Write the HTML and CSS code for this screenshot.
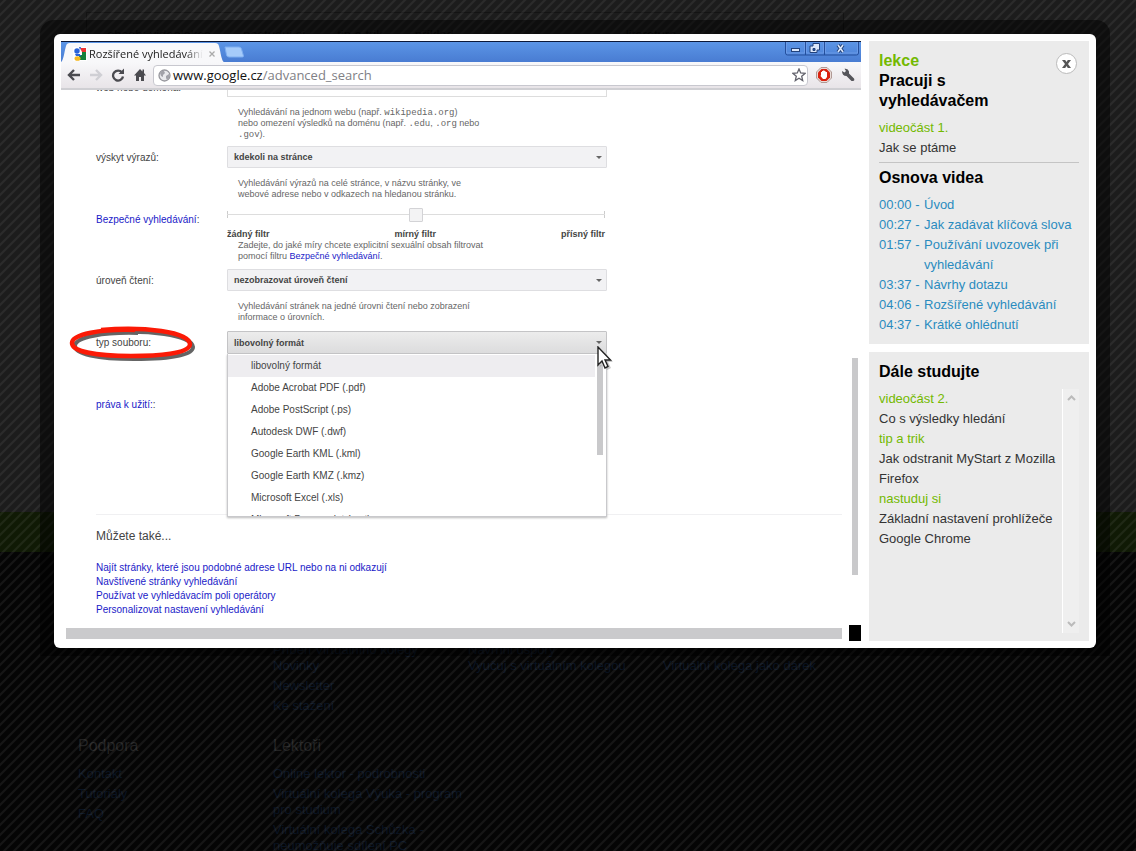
FILE: index.html
```html
<!DOCTYPE html>
<html lang="cs">
<head>
<meta charset="utf-8">
<title>Pracuji s vyhledávačem</title>
<link rel="stylesheet" href="styles.css">
</head>
<body>
<div class="page">
  <header class="page-head">
    <nav class="page-nav"><span>obsah: videolekce</span><span>nastuduj si</span><span>tip a trik</span><span>příklad</span><span class="far">literatura</span></nav>
  </header>
  <div class="strip"></div>
  <footer class="footer">
    <div class="cols">
      <ul></ul>
      <ul><li>Příběh Virtuálního kolegy</li><li>Novinky</li><li>Newsletter</li><li>Ke stažení</li></ul>
      <ul><li>Navrhni úspory</li><li>Vyučuj s virtuálním kolegou</li></ul>
      <ul><li>&nbsp;</li><li>Virtuální kolega jako dárek</li></ul>
    </div>
    <div class="cols">
      <section><h2>Podpora</h2><ul><li>Kontakt</li><li>Tutoriály</li><li>FAQ</li></ul></section>
      <section><h2>Lektoři</h2><ul><li>Online lektor - podrobnosti</li><li>Virtuální kolega Výuka - program pro studium</li><li>Virtuální kolega Schůzka - neumožňuje sdílení PC</li></ul></section>
    </div>
  </footer>
</div>
<svg class="stripes" width="100%" height="100%">
  <defs><pattern id="diag" width="10" height="10" patternUnits="userSpaceOnUse"><path d="M-3 8L8-3M-3 18L18-3M2 13L13 2" fill="none"/><path d="M-2 7L7-2M-2 17L17-2" stroke="#fff" stroke-opacity=".065" stroke-width="2"/></pattern></defs>
  <rect width="100%" height="100%" fill="url(#diag)"/>
</svg>

<div class="frame" role="dialog" aria-label="Pracuji s vyhledávačem">
 <div class="dialog">
  <main class="browser">
    <div class="tabstrip">
      <svg class="edge" width="9" height="19" viewBox="0 0 9 19"><path d="M0 19C3 18 4 3 6 1Q7 0 9 0V19Z" fill="#f8f8fa"/></svg>
      <div class="tab">
        <svg width="14" height="14" viewBox="0 0 14 14"><path fill="#fff" d="M0 0H14V14H0z"/><path fill="#e33" d="M7 1h6v4H9z"/><path fill="#16803a" d="M8 5h5v8H6V9h2z"/><circle cx="4" cy="4" r="2.700" fill="#2a62d8"/><path fill="#2a62d8" d="M6 0l2 0-1 3zM2 7h6v2H3z"/><ellipse cx="4.500" cy="11.500" rx="3" ry="2.300" fill="#f5b820"/><path fill="#fff" d="M7 5h2v3H7z"/></svg>
        <span class="tab-title">Rozšířené vyhledávání</span>
        <svg width="6" height="6" viewBox="0 0 6 6"><path d="M.5.500l5 5m0-5l-5 5" stroke="#aaa" stroke-width="1.300"/></svg>
      </div>
      <svg class="edge" width="9" height="19" viewBox="0 0 9 19"><path d="M9 19C6 18 5 3 3 1Q2 0 0 0V19Z" fill="#f8f8fa"/></svg>
      <svg class="newtab" width="20" height="12" viewBox="0 0 20 12"><path d="M1 1h14q2 0 2.500 2l2 7q0 1-1 1H5q-2 0-2.500-2z" fill="#a5cbfa" stroke="#7eaef0"/></svg>
      <svg class="wins" width="74" height="14" viewBox="0 0 74 14"><path d="M.5 0v11q0 2 2 2h69q2 0 2-2V0M20.500 0v13M39.500 0v13" fill="none" stroke="#244f9c"/><path d="M1.500 0v11h18V0m2 0v11h17V0m2 0v11h32V0" fill="none" stroke="#6b9ae6"/><rect x="6.500" y="6.500" width="8" height="3" fill="#dbe7fa" stroke="#23437c"/><path d="M28 1.500h6.500V8H32v2.500h-7V4h3z" fill="#dbe7fa" stroke="#23437c"/><path d="M28 6.500h2v2h-2z" fill="#2d5aa6" stroke="#23437c"/><path d="M53 3l5 7m0-7l-5 7" stroke="#23437c" stroke-width="3.600"/><path d="M53 3l5 7m0-7l-5 7" stroke="#dbe7fa" stroke-width="1.600"/></svg>
    </div>
    <div class="toolbar">
      <svg width="14" height="14" viewBox="0 0 14 14"><path d="M13 7H3M7 2L2 7l5 5" fill="none" stroke="#4b4b50" stroke-width="2.400"/></svg>
      <svg width="14" height="14" viewBox="0 0 14 14"><path d="M1 7h10M7 2l5 5-5 5" fill="none" stroke="#cfcfd4" stroke-width="2.400"/></svg>
      <svg width="14" height="14" viewBox="0 0 14 14"><path d="M11 4.500A5 5 0 1 0 12 8.500" fill="none" stroke="#4b4b50" stroke-width="2.300"/><path d="M13 .5V6H7.500z" fill="#4b4b50"/></svg>
      <svg width="14" height="14" viewBox="0 0 14 14"><path d="M7 1L1 7.500h2V13h3V9h2v4h3V7.500h2L11 5V1.500H9.500v2z" fill="#4b4b50"/></svg>
      <div class="address">
        <svg width="13" height="13" viewBox="0 0 13 13"><circle cx="6.500" cy="6.500" r="5.500" fill="#e9e9ec" stroke="#96969c" stroke-width="1.300"/><path d="M2 4q2-3 4-2l1 2-2 2v2L3 7zM8 7l3-2 .5 3-2.500 3-1-2z" fill="#a2a2a9"/></svg>
        <span class="url"><b>www.google.cz</b>/advanced_search</span>
        <svg width="14" height="14" viewBox="0 0 14 14"><path d="M7 1l1.700 4 4.300.4-3.300 2.800 1 4.300L7 10.200l-3.700 2.300 1-4.300L1 5.400 5.300 5z" fill="#fff" stroke="#62626c" stroke-width="1.300"/></svg>
      </div>
      <svg width="16" height="16" viewBox="0 0 16 16"><path d="M5 .5h6L15.500 5v6L11 15.500H5L.5 11V5z" fill="#e9dcd8" stroke="#b09a96"/><path d="M5.500 2h5L14 5.500v5L10.500 14h-5L2 10.500v-5z" fill="#d9220f"/><path d="M5 7V5h1V4h1V3.500h1.500V4h1v1H11v5l-1.500 2H7L4.500 9 5 8z" fill="#fff"/></svg>
      <svg class="wrench" width="14" height="14" viewBox="0 0 14 14"><path d="M1 3l2.500 1.500L5 3 3.500.8Q7 0 8 3.500L8 5.500l5 5q1 2-1 2.500h-1.500L5.500 8Q1 8 1 3z" fill="#55555a"/></svg>
    </div>

    <div class="viewport">
      <div class="row row-web">
        <label for="web">web nebo doména:</label>
        <div class="control">
          <input class="webfield" id="web" type="text">
          <p class="help">Vyhledávání na jednom webu (např. <code>wikipedia.org</code>)<br>nebo omezení výsledků na doménu (např. <code>.edu</code>, <code>.org</code> nebo<br><code>.gov</code>).</p>
        </div>
      </div>
      <div class="row">
        <label for="where">výskyt výrazů:</label>
        <div class="control">
          <select id="where"><option>kdekoli na stránce</option></select>
          <p class="help">Vyhledávání výrazů na celé stránce, v názvu stránky, ve<br>webové adrese nebo v odkazech na hledanou stránku.</p>
        </div>
      </div>
      <div class="row row-safe">
        <label for="safe"><a href="#">Bezpečné vyhledávání</a>:</label>
        <div class="control">
          <input type="range" id="safe" min="0" max="2" value="1">
          <div class="scale"><span>žádný filtr</span><span>mírný filtr</span><span>přísný filtr</span></div>
          <p class="help">Zadejte, do jaké míry chcete explicitní sexuální obsah filtrovat<br>pomocí filtru <a href="#">Bezpečné vyhledávání</a>.</p>
        </div>
      </div>
      <div class="row">
        <label for="level">úroveň čtení:</label>
        <div class="control">
          <select id="level"><option>nezobrazovat úroveň čtení</option></select>
          <p class="help">Vyhledávání stránek na jedné úrovni čtení nebo zobrazení<br>informace o úrovních.</p>
        </div>
      </div>
      <div class="row">
        <label for="type">typ souboru:</label>
        <svg class="ring" width="128" height="38" viewBox="0 0 128 38"><path d="M32 4C75 0 120 6 121 18 121 28 88 30 62 30 25 30 3 25 3 17 3 8 32 3 66 4" fill="none" stroke="#222" stroke-opacity=".7" stroke-width="4" transform="translate(3 3)"/><path d="M32 4C75 0 120 6 121 18 121 28 88 30 62 30 25 30 3 25 3 17 3 8 32 3 66 4" fill="none" stroke="#fb1a06" stroke-width="4.500"/></svg>
        <div class="control">
          <button class="open" id="type" type="button">libovolný formát</button>
          <ul class="menu">
            <li class="on">libovolný formát</li><li>Adobe Acrobat PDF (.pdf)</li><li>Adobe PostScript (.ps)</li><li>Autodesk DWF (.dwf)</li><li>Google Earth KML (.kml)</li><li>Google Earth KMZ (.kmz)</li><li>Microsoft Excel (.xls)</li><li>Microsoft Powerpoint (.ppt)</li>
          </ul>
          <svg class="cursor" width="16" height="26" viewBox="0 0 16 26"><path d="M3 3v18l4-4 3 7 4-2-3-6h5z" fill="#999" opacity=".5"/><path d="M1 1v18l4-4 3 7 3-1.500L8 14h5.500z" fill="#fff" stroke="#222" stroke-width="1.400"/></svg>
        </div>
      </div>
      <div class="row row-rights"><label><a href="#">práva k užití:</a>:</label></div>
      <div class="also">
        <h2>Můžete také...</h2>
        <a href="#">Najít stránky, které jsou podobné adrese URL nebo na ni odkazují</a>
        <a href="#">Navštívené stránky vyhledávání</a>
        <a href="#">Používat ve vyhledávacím poli operátory</a>
        <a href="#">Personalizovat nastavení vyhledávání</a>
      </div>
      <div class="hbar"><i></i><b></b></div>
      <div class="vbar"></div>
    </div>
  </main>

  <aside class="side">
    <section class="card">
      <button class="close" type="button" aria-label="Zavřít"><svg width="9" height="8" viewBox="0 0 9 8"><path d="M0 0h3.200L4.500 2 5.800 0H9L6 4 9 8H5.800L4.500 6 3.200 8H0l3-4z" fill="#555"/></svg></button>
      <h1><span>lekce</span><br>Pracuji s<br>vyhledávačem</h1>
      <p class="part"><span>videočást 1.</span><br>Jak se ptáme</p>
      <h2>Osnova videa</h2>
      <ul class="outline">
        <li><a href="#"><span>00:00 -</span><span>Úvod</span></a></li>
        <li><a href="#"><span>00:27 -</span><span>Jak zadávat klíčová slova</span></a></li>
        <li><a href="#"><span>01:57 -</span><span>Používání uvozovek při vyhledávání</span></a></li>
        <li><a href="#"><span>03:37 -</span><span>Návrhy dotazu</span></a></li>
        <li><a href="#"><span>04:06 -</span><span>Rozšířené vyhledávání</span></a></li>
        <li><a href="#"><span>04:37 -</span><span>Krátké ohlédnutí</span></a></li>
      </ul>
    </section>
    <section class="card next">
      <h2>Dále studujte</h2>
      <div class="scroller">
        <dl><dt>videočást 2.</dt><dd>Co s výsledky hledání</dd><dt>tip a trik</dt><dd>Jak odstranit MyStart z Mozilla Firefox</dd><dt>nastuduj si</dt><dd>Základní nastavení prohlížeče Google Chrome</dd></dl>
        <div class="rail"><svg width="9" height="7" viewBox="0 0 9 7"><path d="M1 6l3.500-3.500L8 6" fill="none" stroke="#bbb" stroke-width="2"/></svg><svg width="9" height="7" viewBox="0 0 9 7"><path d="M1 1l3.500 3.500L8 1" fill="none" stroke="#bbb" stroke-width="2"/></svg></div>
      </div>
    </section>
  </aside>
 </div>
</div>
</body>
</html>
```
FILE: styles.css
```css
* { box-sizing: border-box; }
body, h1, h2, p, ul, dl, dd { margin: 0; padding: 0; }
ul { list-style: none; }
svg { display: block; flex: none; }
body {
  font: 13px/20px "Liberation Sans", Arial, sans-serif;
  color: #333;
  background: #050505;
  height: 100vh;
  overflow: hidden;
  position: relative;
}
a { text-decoration: none; }

/* dimmed page under the dialog */
.page-head { height: 512px; background: #1c1c1c; padding: 12px 292px 0 86px; }
.page-nav {
  display: flex;
  gap: 32px;
  height: 100px;
  padding: 12px 20px;
  border: 1px solid #131313;
  font-size: 13px;
  color: #0c0c0c;
}
.far { margin-left: 140px; }
.strip { height: 40px; background: #101a05; }
.footer { background: #050505; padding: 90px 78px 0; color: #0a1422; }
.cols { display: grid; grid-template-columns: repeat(4, 195px); }
.cols + .cols { margin-top: 18px; }
.cols li { line-height: 16px; margin-bottom: 4px; }
.cols:first-child li:first-child { margin-bottom: 0; }
.cols h2 { font-size: 16px; font-weight: 400; line-height: 20px; margin-bottom: 10px; color: #222; }
.stripes { position: absolute; inset: 0; }

.frame {
  position: absolute;
  top: 20px;
  left: 40px;
  right: 26px;
  padding: 14px 14px 8px;
  background: rgba(0,0,0,.5);
  border-radius: 14px 14px 0 0;
}
.dialog { display: flex; gap: 8px; padding: 7px; background: #fff; border-radius: 6px; }

/* browser window */
.browser { flex: 1; min-width: 0; display: flex; flex-direction: column; }
.tabstrip {
  display: flex;
  align-items: flex-end;
  height: 21px;
  border-top: 1px solid #0b1838;
  background: linear-gradient(#5b95e6, #497cd2);
}
.tab { display: flex; align-items: center; gap: 2px; height: 19px; padding: 2px 0 0 3px; background: #f8f8fa; }
.tab-title {
  width: 114px;
  overflow: hidden;
  white-space: nowrap;
  font: 11px/16px "Open Sans", "Noto Sans", sans-serif;
  color: #222;
  margin-right: 4px;
  -webkit-mask-image: linear-gradient(90deg, #000 85%, transparent);
  mask-image: linear-gradient(90deg, #000 85%, transparent);
}
.newtab { align-self: center; }
.wins { margin: 0 2px 0 auto; align-self: flex-start; }
.toolbar {
  display: flex;
  align-items: center;
  gap: 8px;
  height: 28px;
  padding: 0 6px;
  background: linear-gradient(#f8f8fa, #e8e4e8);
  border-bottom: 2px solid #cfcfd3;
}
.address {
  flex: 1;
  display: flex;
  align-items: center;
  gap: 2px;
  height: 21px;
  margin-left: -2px;
  padding: 0 1px 0 4px;
  background: #fff;
  border: 1px solid #c8c8cf;
  border-radius: 4px;
}
.url { flex: 1; font: 13px/18px "Open Sans", "Noto Sans", sans-serif; color: #808085; }
.url b { font-weight: 400; color: #111; }
.wrench { margin-left: 1px; }

.viewport { position: relative; flex: 1; overflow: hidden; font-size: 10px; color: #444; }
.viewport a { color: #1a1ac8; }
.row { position: relative; display: grid; grid-template-columns: 131px 380px; min-height: 62px; padding-left: 35px; }
.row label { line-height: 23px; }
.row-web { height: 56px; min-height: 0; }
.row-web label { line-height: 12px; margin-top: -8px; }
.row-safe { min-height: 61px; }
.row-rights { min-height: 121px; }
.control { position: relative; }
.webfield { display: block; width: 380px; height: 7px; border: 1px solid #ddd; border-top: 0; }
.help { margin: 10px 0 0 11px; font-size: 9px; line-height: 11px; white-space: nowrap; color: #666; }
.help code { font: 9px/10px "Liberation Mono", monospace; }
select, .open {
  display: block;
  appearance: none;
  width: 100%;
  height: 22px;
  margin: 0;
  padding: 0 6px;
  border: 1px solid #dedee1;
  border-radius: 1px;
  background: #f2f2f4;
  font: bold 9px/18px "Liberation Sans", Arial, sans-serif;
  color: #444;
  text-align: left;
}
.open { height: 23px; background: linear-gradient(#ececec, #dcdcdd); border-color: #c4c4c6; }
.control:has(select)::after, .control:has(.open)::after {
  content: "";
  position: absolute;
  top: 10px;
  right: 5px;
  border: 3px solid transparent;
  border-top-color: #666;
  border-bottom: 0;
}
input[type=range] {
  display: block;
  appearance: none;
  width: 378px;
  height: 13px;
  margin: 0;
  background: linear-gradient(#ddd, #ddd) 0 6px / 100% 1px no-repeat, linear-gradient(#ccc, #ccc) 0 3px / 1px 7px no-repeat, linear-gradient(#ccc, #ccc) 100% 3px / 1px 7px no-repeat;
}
input[type=range]::-webkit-slider-thumb { appearance: none; width: 14px; height: 14px; border: 1px solid #d3d3d6; border-radius: 1px; background: #f3f3f4; }
.scale { display: flex; justify-content: space-between; width: 378px; margin-top: 7px; font-size: 9px; font-weight: 700; line-height: 12px; }
.scale + .help { margin-top: 0; }
.ring { position: absolute; left: 8px; top: -5px; }
.menu {
  position: absolute;
  top: 23px;
  left: 0;
  right: 0;
  height: 163px;
  padding-top: 1px;
  overflow: hidden;
  background: #fff;
  border: 1px solid #c9c9cc;
  border-top: 0;
  box-shadow: 0 1px 2px #bbb;
}
.menu li { line-height: 22px; padding-left: 23px; margin-right: 11px; }
.menu .on { background: #eeedf0; }
.menu::after { content: ""; position: absolute; right: 3px; top: 11px; width: 6px; height: 90px; background: #c9c9cb; }
.cursor { position: absolute; right: -6px; top: 15px; z-index: 2; }
.also { display: flex; flex-direction: column; margin: 0 19px 0 35px; padding-top: 13px; border-top: 1px solid #f0f0f2; line-height: 14px; }
.also h2 { font-size: 12px; font-weight: 400; line-height: 16px; margin-bottom: 17px; }
.hbar { display: flex; align-items: center; gap: 7px; margin: 8px 0 0 5px; }
.hbar i { flex: 1; height: 11px; background: #cacacc; }
.hbar b { width: 12px; height: 16px; background: #000; }
.vbar { position: absolute; right: 3px; top: 268px; width: 6px; height: 217px; background: #c9c9cb; }

/* lesson panel */
.side { flex: none; width: 220px; display: flex; flex-direction: column; gap: 8px; }
.card { position: relative; background: #ebebeb; padding: 10px 10px 9px; }
.card h1, .card h2 { font-size: 16px; line-height: 20px; color: #000; }
.card h1 span, .part span, dt { color: #73b900; }
.part { margin: 7px 0 5px; padding-bottom: 4px; border-bottom: 1px solid #c4c4c4; }
.outline { margin-top: 7px; }
.outline a { display: grid; grid-template-columns: 45px 1fr; color: #2a8bbf; }
.close {
  position: absolute;
  top: 12px;
  right: 12px;
  display: grid;
  place-items: center;
  width: 21px;
  height: 21px;
  padding: 0;
  border: 1px solid #bbb;
  border-radius: 50%;
  background: #fff;
}
.next { flex: 1; display: flex; flex-direction: column; padding-bottom: 8px; }
.scroller { flex: 1; display: flex; margin-top: 7px; }
.scroller dl { flex: 1; min-width: 0; }
.rail {
  display: flex;
  flex-direction: column;
  justify-content: space-between;
  align-items: center;
  width: 17px;
  padding: 5px 0;
  border-left: 1px solid #fff;
  background: #efefef;
}
```
